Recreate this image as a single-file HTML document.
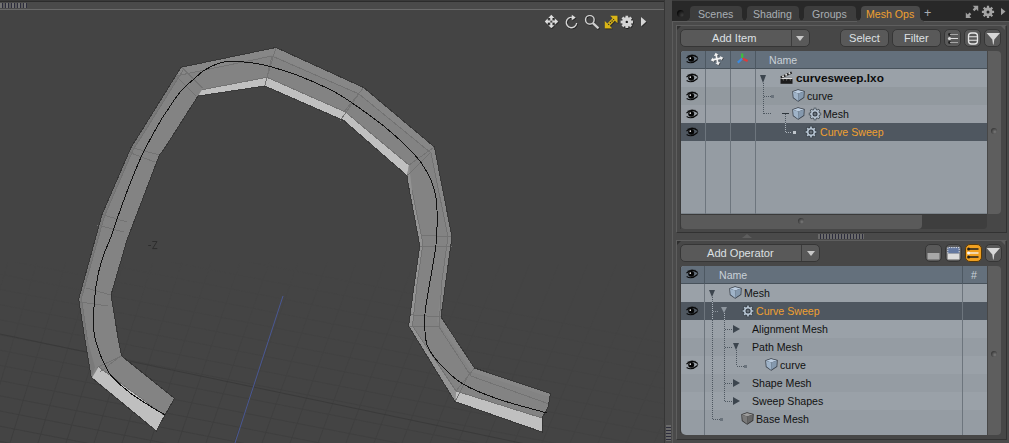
<!DOCTYPE html>
<html><head><meta charset="utf-8">
<style>
*{margin:0;padding:0;box-sizing:border-box}
html,body{width:1009px;height:443px;overflow:hidden;background:#444444;font-family:"Liberation Sans",sans-serif;position:relative}
.a{position:absolute}
.t{position:absolute;white-space:nowrap;font-size:11px;line-height:12px;color:#111}
.btn{position:absolute;background:#595959;border:1px solid #363636;border-radius:5px}
.bt{position:absolute;white-space:nowrap;font-size:11.1px;line-height:12px;color:#dde0e3}
.tab{position:absolute;top:6px;height:15px;background:#3d3d3d;border-radius:4px 4px 0 0}
.tt{position:absolute;top:8px;white-space:nowrap;font-size:10.6px;line-height:12px;color:#a9aeb4}
svg{position:absolute;overflow:visible}
</style></head><body>
<!-- ============ VIEWPORT ============ -->
<div class="a" style="left:0;top:0;width:664px;height:1px;background:#3a3a3a"></div>
<div class="a" style="left:0;top:1px;width:664px;height:1px;background:#2c2c2c"></div>
<div class="a" style="left:0;top:2px;width:664px;height:7px;background:#4a4a4a"></div>
<div class="a" style="left:0;top:3px;width:27px;height:5px;background:repeating-linear-gradient(90deg,#727272 0 2px,#2c2c3c 2px 3px,#5e5e5e 3px 5px,#2c2c3c 5px 6px)"></div>
<div class="a" style="left:0;top:9px;width:664px;height:1px;background:#6a6a6a"></div>
<div class="a" style="left:664px;top:0;width:1px;height:443px;background:#363636"></div>
<div class="a" style="left:665px;top:0;width:7px;height:443px;background:#4a4a4a"></div>
<div class="a" style="left:666px;top:425px;width:5px;height:16px;background:repeating-linear-gradient(180deg,#6a6a6a 0 2px,#2c2c3c 2px 3px)"></div>

<!-- MESH -->
<svg class="a" style="left:0;top:0" width="664" height="443" viewBox="0 0 664 443">
<defs><linearGradient id="gfy" x1="0" y1="0" x2="0" y2="1"><stop offset="0" stop-color="#fff" stop-opacity="0"/><stop offset="0.45" stop-color="#fff" stop-opacity="0.4"/><stop offset="1" stop-color="#fff" stop-opacity="1"/></linearGradient><linearGradient id="gfx" x1="0" y1="0" x2="1" y2="0"><stop offset="0" stop-color="#fff" stop-opacity="1"/><stop offset="0.55" stop-color="#fff" stop-opacity="0.7"/><stop offset="1" stop-color="#fff" stop-opacity="0.25"/></linearGradient><mask id="gm"><rect x="0" y="262" width="664" height="181" fill="url(#gfy)"/></mask><mask id="gm2"><rect x="0" y="0" width="664" height="443" fill="url(#gfx)"/></mask></defs>
<g mask="url(#gm2)"><g mask="url(#gm)" stroke="#3d3d3d" stroke-width="1" fill="none">
<path d="M0 213.4 L664 342.9"/>
<path d="M0 228.6 L664 358.1"/>
<path d="M0 243.8 L664 373.3"/>
<path d="M0 259.0 L664 388.5"/>
<path d="M0 274.2 L664 403.7"/>
<path d="M0 289.4 L664 418.9"/>
<path d="M0 304.6 L664 434.1"/>
<path d="M0 319.8 L664 449.3"/>
<path d="M0 335.0 L664 464.5"/>
<path d="M0 350.2 L664 479.7"/>
<path d="M0 365.4 L664 494.9"/>
<path d="M0 380.6 L664 510.1"/>
<path d="M0 395.8 L664 525.3"/>
<path d="M0 411.0 L664 540.5"/>
<path d="M0 426.2 L664 555.7"/>
<path d="M0 441.4 L664 570.9"/>
<path d="M0 456.6 L664 586.1"/>
<path d="M0 471.8 L664 601.3"/>
<path d="M0 487.0 L664 616.5"/>
<path d="M0 502.2 L664 631.7"/>
<path d="M0 517.4 L664 646.9"/>
<path d="M0 532.6 L664 662.1"/>
<path d="M-46.0 443 L17.6 230"/>
<path d="M-18.0 443 L46.8 230"/>
<path d="M10.0 443 L76.0 230"/>
<path d="M38.0 443 L105.2 230"/>
<path d="M66.0 443 L134.4 230"/>
<path d="M94.0 443 L163.6 230"/>
<path d="M122.0 443 L192.8 230"/>
<path d="M150.0 443 L222.0 230"/>
<path d="M178.0 443 L251.2 230"/>
<path d="M206.0 443 L280.4 230"/>
<path d="M234.0 443 L309.6 230"/>
<path d="M262.0 443 L338.8 230"/>
<path d="M290.0 443 L368.0 230"/>
<path d="M318.0 443 L397.2 230"/>
<path d="M346.0 443 L426.4 230"/>
<path d="M374.0 443 L455.6 230"/>
<path d="M402.0 443 L484.8 230"/>
<path d="M430.0 443 L514.0 230"/>
<path d="M458.0 443 L543.2 230"/>
<path d="M486.0 443 L572.4 230"/>
<path d="M514.0 443 L601.6 230"/>
<path d="M542.0 443 L630.8 230"/>
<path d="M570.0 443 L660.0 230"/>
<path d="M598.0 443 L689.2 230"/>
<path d="M626.0 443 L718.4 230"/>
<path d="M654.0 443 L747.6 230"/>
<path d="M682.0 443 L776.8 230"/>
<path d="M710.0 443 L806.0 230"/>
<path d="M738.0 443 L835.2 230"/>
<path d="M766.0 443 L864.4 230"/>
<path d="M794.0 443 L893.6 230"/>
<path d="M822.0 443 L922.8 230"/>
</g></g>
<path d="M0 334 L664 473" stroke="#363636" stroke-width="1" fill="none" opacity="0.7"/>
<path d="M283 296 L235 443" stroke="#4a5894" stroke-width="1" fill="none"/>
<path d="M152.3 241.5 H157 L152.6 248.6 H157.3 M148.2 245.5 H151" fill="none" stroke="#2d2d2d" stroke-width="1"/>
<polygon fill="#838383" points="91.2,377.4 85,340 78.7,299 95,240 102,214.5 131,147.4 142,130 181,67.3 276,47.5 363.6,87.5 434.4,147 452,237 446,280 441,317 474.5,368 550.5,393.5 548,407.4 542,418 542,432 455,401.6 408.6,326 414.8,280 419.8,245.8 407.4,180 407,175.7 344,120.7 264.8,86 198,96 163.5,150 159.4,155 127,240 111,295 118.4,340 121.7,356 174.5,398.4 164.6,415.6 156.4,431"/>
<polygon fill="#7a7a7a" points="85,340 78.7,299 95,240 102,214.5 131,147.4 142,130 181,67.3 183.5,69.5 144.5,132 133.5,149 104.5,216 97.5,241 81.5,298 87.5,340"/>
<polygon fill="#7a7a7a" points="91.2,377.4 85,340 87.5,340 95,367.3"/>
<polygon fill="#878787" points="181,67.3 276,47.5 363.6,87.5 434.4,147 452,237 446,280 441,317 474.5,368 550.5,393.5 549,397 472,372 437,321 442,280 448,237 431,153 359,94 272,55 176,76"/>
<polygon fill="#c0c0c0" points="202,89.7 267,77.3 345.5,112 409,165 407,175.7 344,120.7 264.8,86 198,96"/>
<polygon fill="#bfbfbf" points="92.2,377.6 98.6,366.8 164.6,415.6 156.4,431"/>
<polygon fill="#c0c0c0" points="456,391 542,418 542,432 455,401.6"/>
<polygon fill="#939393" points="409,165 412,190 423,244 417.5,280 412.5,326 456,391 455,401.6 408.6,326 414.8,280 419.8,245.8 407.4,180 407,175.7"/>
<g stroke="#737373" stroke-width="1" fill="none" shape-rendering="crispEdges">
<path d="M182 67.6 L202.6 88.2"/>
<path d="M176 76 L196 96"/>
<path d="M276 47.5 L267 77.3"/>
<path d="M272 56 L264.8 86"/>
<path d="M363.6 87.5 L343.7 112.3"/>
<path d="M358 95 L340 121"/>
<path d="M434.4 147 L409 165"/>
<path d="M430 153 L407 175.7"/>
<path d="M421 235 L451 237"/>
<path d="M420 246 L452 247"/>
<path d="M411 314.8 L441 317"/>
<path d="M408.6 326.5 L438.5 327"/>
<path d="M474.5 368 L456 391"/>
<path d="M470 372 L455 401.6"/>
<path d="M86 288 L111 295"/>
<path d="M80 302 L108 306"/>
<path d="M102 214.5 L127 222"/>
<path d="M97 225 L124 232"/>
<path d="M131 147.4 L159.4 155"/>
<path d="M128 152 L155 162"/>
<path d="M121.7 356 L97.3 367.3"/>
<path d="M118 358 L100 372"/>
<path d="M176 76 L272 56 L359 94 L431 153 L448 237 L442 280 L439 327 L471 376 L549 404"/>
<path d="M87.5 340 L81.5 298 L97.5 241 L104.5 216 L133.5 149 L144.5 132 L183.5 69.5"/>
<path d="M412 190 L423 244 L417.5 280 L412.5 326 L456 391 L542 418"/>
<path d="M202 89.7 L267 77.3 L345.5 112 L409 165"/>
<path d="M98.6 366.8 L164.6 415.6"/>
</g>
<polygon fill="none" stroke="#2e2e2e" stroke-width="1" shape-rendering="crispEdges" opacity="0.85" points="91.2,377.4 85,340 78.7,299 95,240 102,214.5 131,147.4 142,130 181,67.3 276,47.5 363.6,87.5 434.4,147 452,237 446,280 441,317 474.5,368 550.5,393.5 548,407.4 542,418 542,432 455,401.6 408.6,326 414.8,280 419.8,245.8 407.4,180 407,175.7 344,120.7 264.8,86 198,96 163.5,150 159.4,155 127,240 111,295 118.4,340 121.7,356 174.5,398.4 164.6,415.6 156.4,431"/>
<path d="M164.6 414.7 C162.8 413.6 159.4 411.9 153.7 408.3 C148.0 404.7 137.1 398.3 130.2 393.0 C123.2 387.7 115.9 380.8 112.0 376.7 C108.1 372.6 108.6 372.2 106.7 368.6 C104.8 365.0 102.5 361.1 100.4 355.0 C98.3 348.9 95.0 341.2 94.0 332.0 C93.0 322.8 93.8 309.5 94.5 300.0 C95.2 290.5 96.4 282.7 98.0 275.0 C99.6 267.3 102.0 259.8 104.0 254.0 C106.0 248.2 108.2 244.0 109.8 240.0 C111.3 236.0 111.6 234.9 113.3 230.0 C115.0 225.1 117.6 217.3 120.0 210.7 C122.4 204.1 124.9 197.1 127.5 190.3 C130.1 183.5 132.9 176.4 135.6 170.0 C138.3 163.6 139.5 159.9 143.7 151.6 C147.9 143.3 157.0 126.9 161.0 120.0 C165.0 113.1 164.9 114.0 167.6 110.0 C170.3 106.0 174.1 99.9 177.0 96.0 C179.9 92.1 182.2 89.5 185.2 86.6 C188.1 83.7 191.5 81.1 194.7 78.4 C197.9 75.7 200.0 72.9 204.2 70.3 C208.4 67.7 215.0 64.4 220.0 62.9 C225.0 61.4 228.6 61.5 234.0 61.5 C239.4 61.5 246.7 62.2 252.6 63.0 C258.5 63.8 262.0 64.3 269.5 66.4 C277.0 68.5 287.6 71.6 297.7 75.4 C307.8 79.2 321.3 85.2 330.0 89.5 C338.7 93.8 340.8 95.2 350.0 101.5 C359.2 107.8 374.2 118.2 385.0 127.0 C395.8 135.8 407.5 147.0 414.5 154.5 C421.5 162.0 423.7 166.1 427.0 172.0 C430.3 177.9 432.7 183.7 434.4 190.0 C436.1 196.3 436.7 200.9 437.0 210.0 C437.3 219.1 437.4 231.3 436.0 244.6 C434.6 257.9 430.4 277.9 428.5 290.0 C426.6 302.1 425.1 307.9 424.8 317.0 C424.6 326.1 424.5 336.8 427.0 344.6 C429.5 352.4 434.0 357.4 440.0 364.0 C446.0 370.6 453.3 378.2 463.0 384.0 C472.7 389.8 484.0 394.2 498.0 399.0 C512.0 403.8 538.8 410.7 547.0 413.0" fill="none" stroke="#111" stroke-width="1" shape-rendering="crispEdges"/>
</svg>
<!-- VPICONS -->
<svg class="a" style="left:540px;top:10px" width="110" height="24" viewBox="540 10 110 24">
<defs><filter id="sh" x="-30%" y="-30%" width="160%" height="160%"><feDropShadow dx="0.6" dy="0.8" stdDeviation="0.5" flood-color="#000" flood-opacity="0.7"/></filter></defs>
<g filter="url(#sh)">
<path d="M551.3 14.8 L554.3 18 L552.3 18 L552.3 20.6 L554.9 20.6 L554.9 18.6 L558.1 21.6 L554.9 24.6 L554.9 22.6 L552.3 22.6 L552.3 25.2 L554.3 25.2 L551.3 28.1 L548.3 25.2 L550.3 25.2 L550.3 22.6 L547.7 22.6 L547.7 24.6 L544.8 21.6 L547.7 18.6 L547.7 20.6 L550.3 20.6 L550.3 18 L548.3 18 Z" fill="#dedede"/>
<rect x="550.3" y="20.6" width="2" height="2" fill="#444"/>
<path d="M576.6 23 A5.2 5.2 0 1 1 572.2 17.3" fill="none" stroke="#dcdcdc" stroke-width="1.2"/>
<path d="M571.8 14.8 L575.6 17.6 L571.8 20.2 Z" fill="#dcdcdc"/>
<circle cx="589.8" cy="19.8" r="4.3" fill="none" stroke="#d8d8d8" stroke-width="1.2"/>
<path d="M592.8 23 L598.4 28.2" stroke="#d0d0d0" stroke-width="2.2"/>
<path d="M617.4 15.8 L617.4 23 L610.2 15.8 Z" fill="#dab516"/>
<path d="M604.8 28.3 L604.8 21.1 L612 28.3 Z" fill="#dab516"/>
<path d="M607 26.1 L615.2 17.9" stroke="#dab516" stroke-width="3.2"/>
<path d="M608.2 24.9 L614 19.1" stroke="#2a2a2a" stroke-width="1.1" stroke-dasharray="1.4 1"/>
<path d="M625.57 17.36 L625.47 15.74 L628.13 15.74 L628.03 17.36 L629.14 17.82 L630.22 16.61 L632.09 18.48 L630.88 19.56 L631.34 20.67 L632.96 20.57 L632.96 23.23 L631.34 23.13 L630.88 24.24 L632.09 25.32 L630.22 27.19 L629.14 25.98 L628.03 26.44 L628.13 28.06 L625.47 28.06 L625.57 26.44 L624.46 25.98 L623.38 27.19 L621.51 25.32 L622.72 24.24 L622.26 23.13 L620.64 23.23 L620.64 20.57 L622.26 20.67 L622.72 19.56 L621.51 18.48 L623.38 16.61 L624.46 17.82Z" fill="#d4d4d4"/><circle cx="626.8" cy="21.9" r="1.2" fill="#222"/>
<path d="M641 17 L646.2 21.6 L641 26.2 Z" fill="#d6d6d6"/>
</g></svg>

<!-- ============ RIGHT PANEL ============ -->
<svg width="0" height="0" style="position:absolute"><defs>
<symbol id="eye" viewBox="0 0 13 11" overflow="visible"><path d="M0.4 4.6 Q5.8 -1.2 12.4 3.6" fill="none" stroke="#080808" stroke-width="1.3"/><path d="M1.2 2.4 Q6 0 11 1.6" fill="none" stroke="#080808" stroke-width="0.8" opacity="0.7"/><path d="M0.6 8.2 Q6 11.8 12.2 6.4" fill="none" stroke="#080808" stroke-width="1.3"/><path d="M12.4 3.6 Q13.2 5.2 12.2 6.4" fill="none" stroke="#080808" stroke-width="1"/><ellipse cx="5.6" cy="5.3" rx="3.3" ry="3.2" fill="#050505"/><circle cx="4.6" cy="4.6" r="0.9" fill="#f4f4f4"/></symbol>
<symbol id="cube" viewBox="0 0 13 13" overflow="visible"><path d="M6 0.3 L12.7 1.9 L12.3 8.7 L6.2 12.7 L0.8 8.9 L0.3 2.3 Z" fill="#343b45"/><path d="M6 1.1 L11.9 2.4 L6.3 4.6 L1 2.7 Z" fill="#bccde0"/><path d="M1 2.7 L6.3 4.6 L6.1 11.9 L1.5 8.5 Z" fill="#9fb3c8"/><path d="M6.3 4.6 L11.9 2.4 L11.6 8.3 L6.1 11.9 Z" fill="#8599ae"/></symbol>
<symbol id="cubeg" viewBox="0 0 13 13" overflow="visible"><path d="M6 0.3 L12.7 1.9 L12.3 8.7 L6.2 12.7 L0.8 8.9 L0.3 2.3 Z" fill="#2e2e2e"/><path d="M6 1.1 L11.9 2.4 L6.3 4.6 L1 2.7 Z" fill="#9c9c9c"/><path d="M1 2.7 L6.3 4.6 L6.1 11.9 L1.5 8.5 Z" fill="#7a7a7a"/><path d="M6.3 4.6 L11.9 2.4 L11.6 8.3 L6.1 11.9 Z" fill="#666"/></symbol>
<symbol id="gear" viewBox="0 0 12 12" overflow="visible"><path d="M4.76 1.26 L4.72 -0.17 L7.28 -0.17 L7.24 1.26 L8.48 1.77 L9.46 0.73 L11.27 2.54 L10.23 3.52 L10.74 4.76 L12.17 4.72 L12.17 7.28 L10.74 7.24 L10.23 8.48 L11.27 9.46 L9.46 11.27 L8.48 10.23 L7.24 10.74 L7.28 12.17 L4.72 12.17 L4.76 10.74 L3.52 10.23 L2.54 11.27 L0.73 9.46 L1.77 8.48 L1.26 7.24 L-0.17 7.28 L-0.17 4.72 L1.26 4.76 L1.77 3.52 L0.73 2.54 L2.54 0.73 L3.52 1.77Z" fill="#323a42"/><path d="M5.18 1.88 L5.14 0.57 L6.86 0.57 L6.82 1.88 L8.33 2.51 L9.23 1.55 L10.45 2.77 L9.49 3.67 L10.12 5.18 L11.43 5.14 L11.43 6.86 L10.12 6.82 L9.49 8.33 L10.45 9.23 L9.23 10.45 L8.33 9.49 L6.82 10.12 L6.86 11.43 L5.14 11.43 L5.18 10.12 L3.67 9.49 L2.77 10.45 L1.55 9.23 L2.51 8.33 L1.88 6.82 L0.57 6.86 L0.57 5.14 L1.88 5.18 L2.51 3.67 L1.55 2.77 L2.77 1.55 L3.67 2.51Z" fill="#b8c6d4"/><circle cx="6" cy="6" r="2.5" fill="#323a42"/><circle cx="6" cy="6" r="1.5" fill="#6a737c"/></symbol>
<symbol id="clap" viewBox="0 0 13 13" overflow="visible"><rect x="0.5" y="6.8" width="12" height="6" fill="#1c1c1c"/><rect x="0.5" y="6.8" width="12" height="1.2" fill="#dcdcdc"/><path d="M0.3 5.6 L11.2 0.4 L12.2 2.4 L1.2 7.6 Z" fill="#202020"/><path d="M1.8 4.9 L3.4 4.1 L4.2 5.7 L2.6 6.5 Z M5 3.4 L6.6 2.6 L7.4 4.2 L5.8 5 Z M8.2 1.9 L9.8 1.1 L10.6 2.7 L9 3.5 Z" fill="#e0e0e0"/><path d="M2.5 8.2 L4 8.2 L3.2 10 Z M6 8.2 L7.5 8.2 L6.7 10 Z M9.5 8.2 L11 8.2 L10.2 10 Z" fill="#bbb" opacity="0.6"/></symbol>
</defs></svg>
<div class="a" style="left:672px;top:0px;width:337px;height:443px;background:#4a4a4a;"></div>
<div class="a" style="left:672px;top:0px;width:337px;height:1px;background:#3c3c3c;"></div>
<div class="a" style="left:672px;top:1px;width:337px;height:20px;background:#282828;"></div>
<div class="a" style="left:676.5px;top:9.5px;width:7px;height:7px;border-radius:50%;background:radial-gradient(circle at 75% 75%,#3c3c3c 0,#222 40%,#050505 80%)"></div>
<div class="tab" style="left:690px;width:52px"></div><div class="tt" style="left:698px">Scenes</div>
<div class="a" style="left:686px;top:17px;width:4px;height:4px;background:radial-gradient(circle at 0 0,transparent 3.5px,#3d3d3d 4px)"></div>
<div class="a" style="left:742px;top:17px;width:4px;height:4px;background:radial-gradient(circle at 100% 0,transparent 3.5px,#3d3d3d 4px)"></div>
<div class="tab" style="left:747px;width:52px"></div><div class="tt" style="left:753px">Shading</div>
<div class="a" style="left:743px;top:17px;width:4px;height:4px;background:radial-gradient(circle at 0 0,transparent 3.5px,#3d3d3d 4px)"></div>
<div class="a" style="left:799px;top:17px;width:4px;height:4px;background:radial-gradient(circle at 100% 0,transparent 3.5px,#3d3d3d 4px)"></div>
<div class="tab" style="left:804px;width:52px"></div><div class="tt" style="left:812px">Groups</div>
<div class="a" style="left:800px;top:17px;width:4px;height:4px;background:radial-gradient(circle at 0 0,transparent 3.5px,#3d3d3d 4px)"></div>
<div class="a" style="left:856px;top:17px;width:4px;height:4px;background:radial-gradient(circle at 100% 0,transparent 3.5px,#3d3d3d 4px)"></div>
<div class="a" style="left:857px;top:17px;width:4px;height:4px;background:radial-gradient(circle at 0 0,transparent 3.5px,#4a4a4a 4px)"></div>
<div class="a" style="left:920px;top:17px;width:4px;height:4px;background:radial-gradient(circle at 100% 0,transparent 3.5px,#4a4a4a 4px)"></div>
<div class="tab" style="left:861px;width:59px;background:#4a4a4a;height:16px"></div><div class="tt" style="left:866px;color:#f0a030">Mesh Ops</div>
<div class="tt" style="left:924px;color:#a9aeb4;font-size:12.5px;top:7px">+</div>
<svg class="a" style="left:960px;top:2px" width="49" height="19" viewBox="960 2 49 19"><path d="M978.2 5.7 L978.2 11.2 L976.3 9.3 L974.4 11.2 L972.7 9.5 L974.6 7.6 L972.7 5.7 Z" fill="#a0a0a0"/><path d="M965.8 18 L965.8 12.5 L967.7 14.4 L969.6 12.5 L971.3 14.2 L969.4 16.1 L971.3 18 Z" fill="#a0a0a0"/><path d="M986.95 7.52 L986.84 5.81 L989.16 5.81 L989.05 7.52 L990.35 8.06 L991.48 6.77 L993.13 8.42 L991.84 9.55 L992.38 10.85 L994.09 10.74 L994.09 13.06 L992.38 12.95 L991.84 14.25 L993.13 15.38 L991.48 17.03 L990.35 15.74 L989.05 16.28 L989.16 17.99 L986.84 17.99 L986.95 16.28 L985.65 15.74 L984.52 17.03 L982.87 15.38 L984.16 14.25 L983.62 12.95 L981.91 13.06 L981.91 10.74 L983.62 10.85 L984.16 9.55 L982.87 8.42 L984.52 6.77 L985.65 8.06Z" fill="#a4a4a4"/><circle cx="988" cy="11.9" r="1.5" fill="#262626"/><path d="M1001 8 L1005.5 11.6 L1001 15.2 Z" fill="#a0a0a0"/></svg>
<div class="a" style="left:672px;top:21px;width:185px;height:1px;background:#5c5c5c;"></div>
<div class="a" style="left:924px;top:21px;width:85px;height:1px;background:#5c5c5c;"></div>
<div class="a" style="left:672px;top:21px;width:1px;height:422px;background:#5c5c5c;"></div>
<div class="a" style="left:676px;top:25px;width:331px;height:208px;background:#474747;border-left:1px solid #5e5e5e;border-top:1px solid #5e5e5e;border-right:1px solid #323232;border-bottom:1px solid #323232"></div>
<div class="a" style="left:677px;top:26px;width:0;height:0;border-top:4px solid #2e2e2e;border-right:4px solid transparent"></div>
<div class="a" style="left:1001px;top:26px;width:0;height:0;border-top:4px solid #5e5e5e;border-left:4px solid transparent"></div>
<div class="btn" style="left:680px;top:29px;width:130px;height:18px;background:#595959;border-color:#363636"></div>
<div class="a" style="left:791px;top:30px;width:1px;height:16px;background:#3c3c3c;"></div>
<div class="bt" style="left:712px;top:32px">Add Item</div>
<div class="a" style="left:796px;top:36px;width:0;height:0;border-left:4px solid transparent;border-right:4px solid transparent;border-top:5px solid #c8c8c8"></div>
<div class="btn" style="left:840px;top:29px;width:49px;height:18px;background:#595959;border-color:#363636"></div>
<div class="bt" style="left:849px;top:32px">Select</div>
<div class="btn" style="left:892px;top:29px;width:49px;height:18px;background:#595959;border-color:#363636"></div>
<div class="bt" style="left:904px;top:32px">Filter</div>
<div class="btn" style="left:944px;top:29px;width:17px;height:18px;background:#595959;border-color:#363636"></div>
<div class="btn" style="left:964px;top:29px;width:17px;height:18px;background:#595959;border-color:#363636"></div>
<div class="btn" style="left:984px;top:29px;width:17px;height:18px;background:#595959;border-color:#363636"></div>
<svg class="a" style="left:945px;top:30px" width="56" height="17" viewBox="945 30 56 17"><circle cx="949.5" cy="34.5" r="1.4" fill="#222"/><circle cx="949.5" cy="38.5" r="1.6" fill="#ddd"/><circle cx="949.5" cy="42.5" r="1.4" fill="#222"/><path d="M950 34.5 H958 M950 38.5 H958 M950 42.5 H958" stroke="#ddd" stroke-width="1.2"/><path d="M950 34.5 H958 M950 42.5 H958" stroke="#222" stroke-width="0.6" opacity="0.5"/><rect x="968.5" y="33" width="9" height="11" rx="3" fill="none" stroke="#e6e6e6" stroke-width="1.3"/><path d="M969 36.7 H977 M969 40.3 H977" stroke="#e6e6e6" stroke-width="1.1"/><path d="M986.6 33 L1000 33 L994.3 39.5 L993.6 44.5 L993 44.5 L992.3 39.5 Z" fill="#d8d8d8"/></svg>
<div class="a" style="left:680px;top:52px;width:1px;height:177px;background:#3a3a3a;"></div>
<div class="a" style="left:681px;top:51px;width:306px;height:163px;background:#959ca3;border-radius:3px 0 0 0;overflow:hidden">
<div class="a" style="left:0px;top:0px;width:307px;height:18px;background:#64707c;"></div>
<div class="a" style="left:0px;top:17px;width:307px;height:1px;background:#48525b;"></div>
<div class="a" style="left:0px;top:18px;width:307px;height:18px;background:#9aa1a8;"></div>
<div class="a" style="left:0px;top:36px;width:307px;height:18px;background:#92999f;"></div>
<div class="a" style="left:0px;top:54px;width:307px;height:18px;background:#999fa6;"></div>
<div class="a" style="left:0px;top:72px;width:307px;height:18px;background:#4f5760;"></div>
<div class="a" style="left:0px;top:162px;width:307px;height:1px;background:#7d858c;"></div>
<div class="a" style="left:24px;top:0px;width:1px;height:163px;background:#6d757d;"></div>
<div class="a" style="left:24px;top:0px;width:1px;height:18px;background:#4d5862;"></div>
<div class="a" style="left:49px;top:0px;width:1px;height:163px;background:#6d757d;"></div>
<div class="a" style="left:49px;top:0px;width:1px;height:18px;background:#4d5862;"></div>
<div class="a" style="left:74px;top:0px;width:1px;height:163px;background:#6d757d;"></div>
<div class="a" style="left:74px;top:0px;width:1px;height:18px;background:#4d5862;"></div>
</div>
<div class="t" style="left:769px;top:54px;color:#c9d0d7;font-size:10.6px;">Name</div>
<svg class="a" style="left:686.0px;top:54.0px" width="12" height="10"><use href="#eye" width="12" height="10"/></svg>
<svg class="a" style="left:709px;top:51px" width="16" height="16" viewBox="709 51 16 16"><g transform="rotate(-12 717 59)"><path d="M717 52.6 L719.4 55.4 L717.9 55.4 L717.9 58.1 L720.6 58.1 L720.6 56.6 L723.4 59 L720.6 61.4 L720.6 59.9 L717.9 59.9 L717.9 62.6 L719.4 62.6 L717 65.4 L714.6 62.6 L716.1 62.6 L716.1 59.9 L713.4 59.9 L713.4 61.4 L710.6 59 L713.4 56.6 L713.4 58.1 L716.1 58.1 L716.1 55.4 L714.6 55.4 Z" fill="#2a2a2a" opacity="0.55" transform="translate(0.6 0.8)"/><path d="M717 52.6 L719.4 55.4 L717.9 55.4 L717.9 58.1 L720.6 58.1 L720.6 56.6 L723.4 59 L720.6 61.4 L720.6 59.9 L717.9 59.9 L717.9 62.6 L719.4 62.6 L717 65.4 L714.6 62.6 L716.1 62.6 L716.1 59.9 L713.4 59.9 L713.4 61.4 L710.6 59 L713.4 56.6 L713.4 58.1 L716.1 58.1 L716.1 55.4 L714.6 55.4 Z" fill="#f2f2f2"/></g></svg>
<svg class="a" style="left:736px;top:52px" width="13" height="12" viewBox="736 52 13 12"><path d="M742.2 58.5 L742.2 53.5" stroke="#3bc33b" stroke-width="2.2"/><path d="M742.2 58.5 L747.6 61" stroke="#e03a3a" stroke-width="2.2"/><path d="M742.2 58.5 L737.8 62.6" stroke="#3a8ae0" stroke-width="2.2"/></svg>
<svg class="a" style="left:686.0px;top:73.0px" width="12" height="10"><use href="#eye" width="12" height="10"/></svg>
<svg class="a" style="left:686.0px;top:91.0px" width="12" height="10"><use href="#eye" width="12" height="10"/></svg>
<svg class="a" style="left:686.0px;top:109.0px" width="12" height="10"><use href="#eye" width="12" height="10"/></svg>
<svg class="a" style="left:686.0px;top:127.0px" width="12" height="10"><use href="#eye" width="12" height="10"/></svg>
<div class="a" style="left:760px;top:75px;width:0;height:0;border-left:3.5px solid transparent;border-right:3.5px solid transparent;border-top:8px solid #3c454e"></div>
<div class="a" style="left:763px;top:83px;width:1px;height:31px;background:repeating-linear-gradient(180deg,#4e5760 0 1px,transparent 1px 2px)"></div>
<div class="a" style="left:764px;top:96px;width:7px;height:1px;background:repeating-linear-gradient(90deg,#4e5760 0 1px,transparent 1px 2px)"></div>
<div class="a" style="left:771px;top:95px;width:3px;height:3px;background:#6a737c;"></div>
<div class="a" style="left:764px;top:113px;width:7px;height:1px;background:repeating-linear-gradient(90deg,#4e5760 0 1px,transparent 1px 2px)"></div>
<div class="a" style="left:782px;top:113px;width:7px;height:1px;background:#2e353c;"></div>
<div class="a" style="left:785px;top:114px;width:1px;height:9px;background:repeating-linear-gradient(180deg,#4e5760 0 1px,transparent 1px 2px)"></div>
<div class="a" style="left:785px;top:123px;width:1px;height:9px;background:repeating-linear-gradient(180deg,#aab2ba 0 1px,transparent 1px 2px)"></div>
<div class="a" style="left:786px;top:132px;width:6px;height:1px;background:repeating-linear-gradient(90deg,#aab2ba 0 1px,transparent 1px 2px)"></div>
<div class="a" style="left:793px;top:131px;width:3px;height:3px;background:#c0c6cc;"></div>
<svg class="a" style="left:780.0px;top:71.0px" width="13" height="13"><use href="#clap" width="13" height="13"/></svg>
<div class="t" style="left:796px;top:72px;color:#0c0c0c;font-size:11.8px;font-weight:bold">curvesweep.lxo</div>
<svg class="a" style="left:792.0px;top:89.0px" width="13" height="13"><use href="#cube" width="13" height="13"/></svg>
<div class="t" style="left:807px;top:90px;color:#111;font-size:10.6px;">curve</div>
<svg class="a" style="left:792.0px;top:107.0px" width="13" height="13"><use href="#cube" width="13" height="13"/></svg>
<svg class="a" style="left:809.0px;top:108.0px" width="12" height="12"><use href="#gear" width="12" height="12"/></svg>
<div class="t" style="left:823px;top:108px;color:#111;font-size:10.6px;">Mesh</div>
<svg class="a" style="left:805.0px;top:126.0px" width="12" height="12"><use href="#gear" width="12" height="12"/></svg>
<div class="t" style="left:820px;top:126px;color:#f0a030;font-size:10.6px;">Curve Sweep</div>
<div class="a" style="left:988px;top:51px;width:13px;height:163px;background:#5e5e5e;border-radius:0 4px 4px 0"></div>
<div class="a" style="left:991px;top:128px;width:6px;height:6px;border-radius:50%;background:radial-gradient(circle at 65% 65%,#7a7a7a 0,#3a3a3a 70%)"></div>
<div class="a" style="left:681px;top:214px;width:306px;height:15px;background:#3e3e3e;border-radius:0 0 4px 4px"></div>
<div class="a" style="left:681px;top:214px;width:241px;height:15px;background:#5a5a5a;border-radius:0 0 4px 4px"></div>
<div class="a" style="left:681px;top:214px;width:306px;height:1px;background:#3a3a3a;"></div>
<div class="a" style="left:798px;top:218px;width:6px;height:6px;border-radius:50%;background:radial-gradient(circle at 65% 65%,#7a7a7a 0,#3a3a3a 70%)"></div>
<div class="a" style="left:742px;top:234px;width:0;height:0;border-left:5px solid transparent;border-right:5px solid transparent;border-bottom:4px solid #5e5e5e"></div>
<div class="a" style="left:818px;top:234px;width:46px;height:5px;background:repeating-linear-gradient(90deg,#6a6a6a 0 2px,#2c2c3c 2px 3px)"></div>
<div class="a" style="left:676px;top:240px;width:331px;height:200px;background:#474747;border-left:1px solid #5e5e5e;border-top:1px solid #5e5e5e;border-right:1px solid #323232;border-bottom:1px solid #323232"></div>
<div class="a" style="left:677px;top:241px;width:0;height:0;border-top:4px solid #2e2e2e;border-right:4px solid transparent"></div>
<div class="a" style="left:1001px;top:241px;width:0;height:0;border-top:4px solid #5e5e5e;border-left:4px solid transparent"></div>
<div class="btn" style="left:680px;top:244px;width:140px;height:18px;background:#595959;border-color:#363636"></div>
<div class="a" style="left:801px;top:245px;width:1px;height:16px;background:#3c3c3c;"></div>
<div class="bt" style="left:707px;top:247px">Add Operator</div>
<div class="a" style="left:807px;top:251px;width:0;height:0;border-left:4px solid transparent;border-right:4px solid transparent;border-top:5px solid #c8c8c8"></div>
<div class="btn" style="left:924.5px;top:244px;width:17px;height:17.5px;background:#595959;border-color:#363636"></div>
<div class="btn" style="left:944.5px;top:244px;width:17px;height:17.5px;background:#595959;border-color:#363636"></div>
<div class="btn" style="left:964.5px;top:244px;width:17px;height:17.5px;background:#f0a020;border-color:#5a3a08"></div>
<div class="btn" style="left:984.5px;top:244px;width:17px;height:17.5px;background:#595959;border-color:#363636"></div>
<svg class="a" style="left:925px;top:245px" width="76" height="17" viewBox="925 245 76 17"><rect x="927.5" y="253" width="12" height="6.5" fill="#a8a8a8"/><rect x="947.5" y="247.3" width="12" height="6.2" fill="#6478a0"/><rect x="947.5" y="253.5" width="12" height="6" fill="#dcdcdc"/><path d="M947.8 253.5 V247.6 H959.2 V253.5" fill="none" stroke="#fff" stroke-width="0.8" stroke-dasharray="1.4 0.9"/><path d="M969.5 249 H978.5 M969.5 257 H978.5" stroke="#1e1e1e" stroke-width="1.3"/><path d="M969.5 253 H978.5" stroke="#f4f4f4" stroke-width="1.3"/><circle cx="968.6" cy="249" r="1.5" fill="#1e1e1e"/><circle cx="968.6" cy="253" r="1.6" fill="#f4f4f4"/><circle cx="968.6" cy="257" r="1.5" fill="#1e1e1e"/><path d="M986.6 248 L1000 248 L994.3 254.5 L993.6 259.5 L993 259.5 L992.3 254.5 Z" fill="#d8d8d8"/></svg>
<div class="a" style="left:680px;top:267px;width:1px;height:166px;background:#3a3a3a;"></div>
<div class="a" style="left:681px;top:266px;width:306px;height:169px;background:#959ca3;border-radius:3px 0 0 5px;overflow:hidden">
<div class="a" style="left:0px;top:0px;width:307px;height:18px;background:#64707c;"></div>
<div class="a" style="left:0px;top:17px;width:307px;height:1px;background:#48525b;"></div>
<div class="a" style="left:0px;top:18px;width:307px;height:18px;background:#9aa1a8;"></div>
<div class="a" style="left:0px;top:36px;width:307px;height:18px;background:#4f5760;"></div>
<div class="a" style="left:0px;top:54px;width:307px;height:18px;background:#9aa1a8;"></div>
<div class="a" style="left:0px;top:72px;width:307px;height:18px;background:#959ca3;"></div>
<div class="a" style="left:0px;top:90px;width:307px;height:18px;background:#9aa1a8;"></div>
<div class="a" style="left:0px;top:108px;width:307px;height:18px;background:#959ca3;"></div>
<div class="a" style="left:0px;top:126px;width:307px;height:18px;background:#9aa1a8;"></div>
<div class="a" style="left:0px;top:144px;width:307px;height:18px;background:#959ca3;"></div>
<div class="a" style="left:23px;top:0px;width:1px;height:169px;background:#6d757d;"></div>
<div class="a" style="left:23px;top:0px;width:1px;height:18px;background:#4d5862;"></div>
<div class="a" style="left:281px;top:0px;width:1px;height:169px;background:#6d757d;"></div>
<div class="a" style="left:281px;top:0px;width:1px;height:18px;background:#4d5862;"></div>
</div>
<div class="a" style="left:988px;top:266px;width:13px;height:169px;background:#5e5e5e;border-radius:0 4px 4px 0"></div>
<div class="a" style="left:991px;top:351px;width:6px;height:6px;border-radius:50%;background:radial-gradient(circle at 65% 65%,#7a7a7a 0,#3a3a3a 70%)"></div>
<div class="t" style="left:719px;top:269px;color:#c9d0d7;font-size:10.6px;">Name</div>
<div class="t" style="left:971px;top:269px;color:#c9d0d7;font-size:10.6px;">#</div>
<svg class="a" style="left:686.0px;top:269.0px" width="12" height="10"><use href="#eye" width="12" height="10"/></svg>
<svg class="a" style="left:686.0px;top:306.0px" width="12" height="10"><use href="#eye" width="12" height="10"/></svg>
<svg class="a" style="left:686.0px;top:360.0px" width="12" height="10"><use href="#eye" width="12" height="10"/></svg>
<div class="a" style="left:709px;top:290px;width:0;height:0;border-left:3.5px solid transparent;border-right:3.5px solid transparent;border-top:7px solid #3c454e"></div>
<div class="a" style="left:712px;top:297px;width:1px;height:5px;background:repeating-linear-gradient(180deg,#4e5760 0 1px,transparent 1px 2px)"></div>
<div class="a" style="left:712px;top:302px;width:1px;height:18px;background:repeating-linear-gradient(180deg,#aab2ba 0 1px,transparent 1px 2px)"></div>
<div class="a" style="left:712px;top:320px;width:1px;height:100px;background:repeating-linear-gradient(180deg,#4e5760 0 1px,transparent 1px 2px)"></div>
<div class="a" style="left:713px;top:419px;width:7px;height:1px;background:repeating-linear-gradient(90deg,#4e5760 0 1px,transparent 1px 2px)"></div>
<div class="a" style="left:720px;top:418px;width:3px;height:3px;background:#6a737c;"></div>
<div class="a" style="left:713px;top:311px;width:6px;height:1px;background:repeating-linear-gradient(90deg,#8f979f 0 1px,transparent 1px 2px)"></div>
<div class="a" style="left:721px;top:307px;width:0;height:0;border-left:3.5px solid transparent;border-right:3.5px solid transparent;border-top:6px solid #8f979f"></div>
<div class="a" style="left:724px;top:313px;width:1px;height:7px;background:repeating-linear-gradient(180deg,#aab2ba 0 1px,transparent 1px 2px)"></div>
<div class="a" style="left:724px;top:320px;width:1px;height:81px;background:repeating-linear-gradient(180deg,#4e5760 0 1px,transparent 1px 2px)"></div>
<div class="a" style="left:725px;top:329px;width:7px;height:1px;background:repeating-linear-gradient(90deg,#4e5760 0 1px,transparent 1px 2px)"></div>
<div class="a" style="left:733px;top:325px;width:0;height:0;border-top:4px solid transparent;border-bottom:4px solid transparent;border-left:7px solid #3c454e"></div>
<div class="a" style="left:725px;top:383px;width:7px;height:1px;background:repeating-linear-gradient(90deg,#4e5760 0 1px,transparent 1px 2px)"></div>
<div class="a" style="left:733px;top:379px;width:0;height:0;border-top:4px solid transparent;border-bottom:4px solid transparent;border-left:7px solid #3c454e"></div>
<div class="a" style="left:725px;top:401px;width:7px;height:1px;background:repeating-linear-gradient(90deg,#4e5760 0 1px,transparent 1px 2px)"></div>
<div class="a" style="left:733px;top:397px;width:0;height:0;border-top:4px solid transparent;border-bottom:4px solid transparent;border-left:7px solid #3c454e"></div>
<div class="a" style="left:725px;top:347px;width:7px;height:1px;background:repeating-linear-gradient(90deg,#4e5760 0 1px,transparent 1px 2px)"></div>
<div class="a" style="left:733px;top:343px;width:0;height:0;border-left:3.5px solid transparent;border-right:3.5px solid transparent;border-top:7px solid #3c454e"></div>
<div class="a" style="left:736px;top:350px;width:1px;height:16px;background:repeating-linear-gradient(180deg,#4e5760 0 1px,transparent 1px 2px)"></div>
<div class="a" style="left:737px;top:366px;width:7px;height:1px;background:repeating-linear-gradient(90deg,#4e5760 0 1px,transparent 1px 2px)"></div>
<div class="a" style="left:744px;top:365px;width:3px;height:3px;background:#6a737c;"></div>
<svg class="a" style="left:729.0px;top:286.0px" width="13" height="13"><use href="#cube" width="13" height="13"/></svg>
<div class="t" style="left:744px;top:287px;color:#111;font-size:10.6px;">Mesh</div>
<svg class="a" style="left:742.0px;top:305.0px" width="12" height="12"><use href="#gear" width="12" height="12"/></svg>
<div class="t" style="left:756px;top:305px;color:#f0a030;font-size:10.6px;">Curve Sweep</div>
<div class="t" style="left:752px;top:323px;color:#111;font-size:10.6px;">Alignment Mesh</div>
<div class="t" style="left:752px;top:341px;color:#111;font-size:10.6px;">Path Mesh</div>
<svg class="a" style="left:765.0px;top:358.0px" width="13" height="13"><use href="#cube" width="13" height="13"/></svg>
<div class="t" style="left:780px;top:359px;color:#111;font-size:10.6px;">curve</div>
<div class="t" style="left:752px;top:377px;color:#111;font-size:10.6px;">Shape Mesh</div>
<div class="t" style="left:752px;top:395px;color:#111;font-size:10.6px;">Sweep Shapes</div>
<svg class="a" style="left:741.0px;top:412.0px" width="13" height="13"><use href="#cubeg" width="13" height="13"/></svg>
<div class="t" style="left:756px;top:413px;color:#111;font-size:10.6px;">Base Mesh</div>
</body></html>
